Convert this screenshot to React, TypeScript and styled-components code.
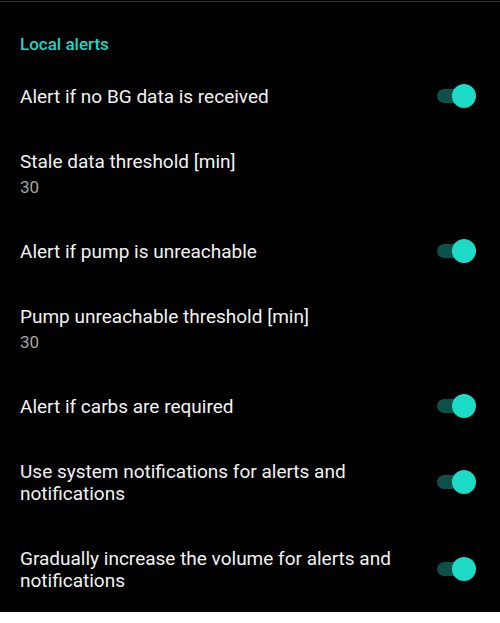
import styled, { createGlobalStyle } from 'styled-components';

const GlobalStyle = createGlobalStyle`
    html, body {
        margin: 0;
        padding: 0;
        background: #ffffff;
    }
    body {
        font-family: Roboto, "Noto Sans", "Liberation Sans", sans-serif;
        -webkit-font-smoothing: antialiased;
    }
`;

type Pref = {
    title: string;
    summary?: string;
    toggle?: boolean;
};

const prefs: Pref[] = [
    { title: 'Alert if no BG data is received', toggle: true },
    { title: 'Stale data threshold [min]', summary: '30' },
    { title: 'Alert if pump is unreachable', toggle: true },
    { title: 'Pump unreachable threshold [min]', summary: '30' },
    { title: 'Alert if carbs are required', toggle: true },
    { title: 'Use system notifications for alerts and notifications', toggle: true },
    { title: 'Gradually increase the volume for alerts and notifications', toggle: true },
];

const Screen = styled.div`
    background: #000000;
    padding-top: 1px;
`;

const TopRule = styled.div`
    height: 1px;
    background: #343434;
`;

const Category = styled.div`
    padding: 32px 20px 9px;
    color: #1fd6c7;
    font-size: 17px;
    font-weight: 500;
    line-height: 20px;
`;

const Row = styled.div`
    display: flex;
    align-items: center;
    padding: 23px 24px 20px 20px;
`;

const Texts = styled.div`
    flex: 1;
    min-width: 0;
    padding-right: 16px;
`;

const Title = styled.div`
    color: #f2f2f2;
    font-size: 19px;
    line-height: 22px;
`;

const Summary = styled.div`
    margin-top: 3px;
    color: #a6a6a6;
    font-size: 17px;
    line-height: 22px;
`;

const SwitchBox = styled.div`
    position: relative;
    width: 39px;
    height: 24px;
    margin-top: -3px;
    flex-shrink: 0;
`;

const Track = styled.div<{ $on: boolean }>`
    position: absolute;
    left: 0;
    top: 5px;
    width: 34px;
    height: 14px;
    border-radius: 7px;
    background: ${(p) => (p.$on ? '#0c5149' : '#5a5a5a')};
`;

const Thumb = styled.div<{ $on: boolean }>`
    position: absolute;
    top: 0;
    left: ${(p) => (p.$on ? '15px' : '0')};
    width: 24px;
    height: 24px;
    border-radius: 50%;
    background: ${(p) => (p.$on ? '#1ddac6' : '#ececec')};
`;

function Switch({ on }: { on: boolean }) {
    return (
        <SwitchBox>
            <Track $on={on} />
            <Thumb $on={on} />
        </SwitchBox>
    );
}

export default function App() {
    return (
        <>
            <GlobalStyle />
            <Screen>
                <TopRule />
                <Category>Local alerts</Category>
                {prefs.map((pref, index) => (
                    <Row key={pref.title + index}>
                        <Texts>
                            <Title>{pref.title}</Title>
                            {pref.summary && <Summary>{pref.summary}</Summary>}
                        </Texts>
                        {pref.toggle && <Switch on />}
                    </Row>
                ))}
            </Screen>
        </>
    );
}
